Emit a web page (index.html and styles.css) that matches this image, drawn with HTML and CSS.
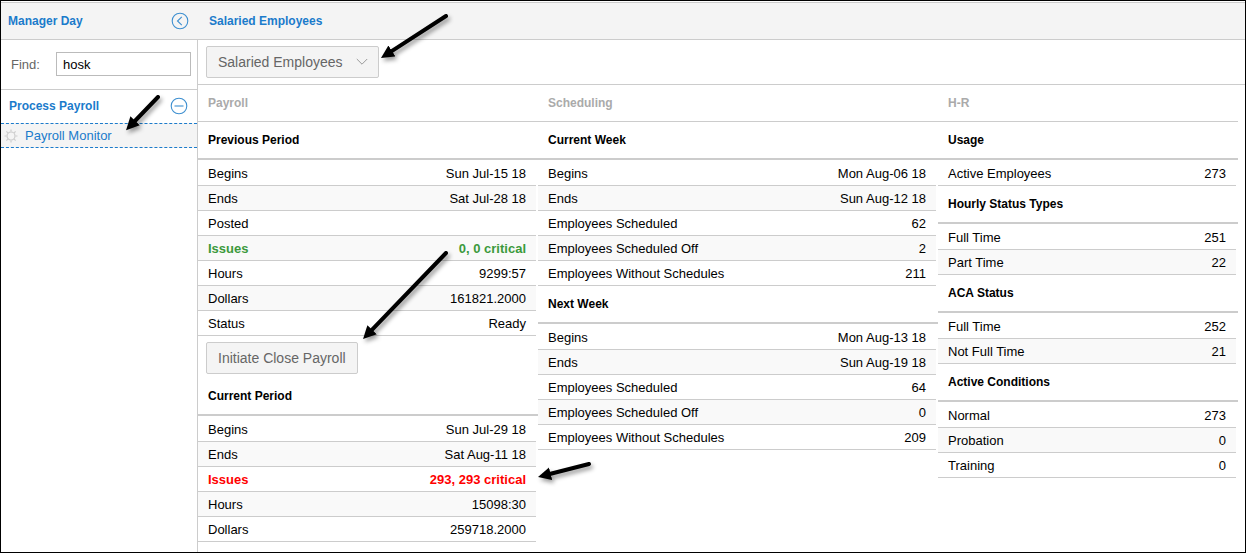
FILE: index.html
```html
<!DOCTYPE html>
<html lang="en">
<head>
<meta charset="utf-8">
<title>Payroll Monitor</title>
<link rel="stylesheet" href="styles.css">
</head>
<body>
<svg class="defs" aria-hidden="true">
  <defs>
    <marker id="head" markerUnits="userSpaceOnUse" markerWidth="16" markerHeight="16" refX="3" refY="7" orient="auto">
      <path d="M0 .5 L13 7 L0 13.5 Z" fill="#000"/>
    </marker>
  </defs>
</svg>
<div class="app">
  <header class="topbar">
    <div class="topbar-side">
      <h1 class="title">Manager Day</h1>
      <button class="icon-btn" aria-label="Collapse menu">
        <svg width="18" height="18" viewBox="0 0 18 18"><circle cx="9" cy="9" r="7.8"/><path d="M10.8 4.8 L6.5 9 L10.8 13.2"/></svg>
      </button>
    </div>
    <h2 class="title topbar-main">Salaried Employees</h2>
  </header>
  <div class="layout">
    <nav class="sidebar">
      <div class="find">
        <label class="find-label" for="find">Find:</label>
        <input class="find-input" id="find" type="text" value="hosk">
      </div>
      <div class="group">
        <h2 class="title">Process Payroll</h2>
        <button class="icon-btn" aria-label="Collapse Process Payroll">
          <svg width="18" height="18" viewBox="0 0 18 18"><circle cx="9" cy="9" r="7.8"/><path d="M4.5 9 H13.5"/></svg>
        </button>
      </div>
      <div class="item">
        <svg class="gear" width="14" height="14" viewBox="0 0 14 14"><circle cx="7" cy="7" r="4"/><path d="M7 .5V2.5M7 11.5V13.5M.5 7H2.5M11.5 7H13.5M2.4 2.4L3.8 3.8M10.2 10.2L11.6 11.6M11.6 2.4L10.2 3.8M3.8 10.2L2.4 11.6"/></svg>
        <a class="item-link" href="#monitor">Payroll Monitor</a>
        <svg class="arrow arrow-item" width="46" height="46"><path d="M38 6 L13 32" marker-end="url(#head)"/></svg>
      </div>
    </nav>
    <main class="main" id="monitor">
      <div class="toolbar">
        <div class="picker">
          <select class="control picker-select" aria-label="Employee group"><option>Salaried Employees</option></select>
          <svg class="chevron" width="12" height="8" viewBox="0 0 12 8"><path d="M.8 1 L6 6.2 L11.2 1"/></svg>
          <svg class="arrow arrow-picker" width="80" height="60"><path d="M71 7 L14.4 43.6" marker-end="url(#head)"/></svg>
        </div>
      </div>
      <div class="columns">
        <section class="column">
          <h2 class="category">Payroll</h2>
          <h3 class="heading" id="previous">Previous Period</h3>
          <div class="rows">
            <table aria-labelledby="previous">
              <tr><th scope="row">Begins</th><td>Sun Jul-15 18</td></tr>
              <tr><th scope="row">Ends</th><td>Sat Jul-28 18</td></tr>
              <tr><th scope="row">Posted</th><td></td></tr>
              <tr class="good"><th scope="row">Issues</th><td>0, 0 critical</td></tr>
              <tr><th scope="row">Hours</th><td>9299:57</td></tr>
              <tr><th scope="row">Dollars</th><td>161821.2000</td></tr>
              <tr><th scope="row">Status</th><td>Ready</td></tr>
            </table>
          </div>
          <div class="action">
            <div class="action-anchor">
              <button class="control">Initiate Close Payroll</button>
              <svg class="arrow arrow-action" width="98" height="100"><path d="M89 6 L13 84.8" marker-end="url(#head)"/></svg>
            </div>
          </div>
          <h3 class="heading" id="current">Current Period</h3>
          <div class="rows">
            <table aria-labelledby="current">
              <tr><th scope="row">Begins</th><td>Sun Jul-29 18</td></tr>
              <tr><th scope="row">Ends</th><td>Sat Aug-11 18</td></tr>
              <tr class="bad"><th scope="row">Issues</th><td>293, 293 critical<svg class="arrow arrow-issues" width="64" height="30"><path d="M57 6 L15.7 16.5" marker-end="url(#head)"/></svg></td></tr>
              <tr><th scope="row">Hours</th><td>15098:30</td></tr>
              <tr><th scope="row">Dollars</th><td>259718.2000</td></tr>
            </table>
          </div>
        </section>
        <section class="column">
          <h2 class="category">Scheduling</h2>
          <h3 class="heading" id="week">Current Week</h3>
          <div class="rows">
            <table aria-labelledby="week">
              <tr><th scope="row">Begins</th><td>Mon Aug-06 18</td></tr>
              <tr><th scope="row">Ends</th><td>Sun Aug-12 18</td></tr>
              <tr><th scope="row">Employees Scheduled</th><td>62</td></tr>
              <tr><th scope="row">Employees Scheduled Off</th><td>2</td></tr>
              <tr><th scope="row">Employees Without Schedules</th><td>211</td></tr>
            </table>
          </div>
          <h3 class="heading" id="next">Next Week</h3>
          <div class="rows">
            <table aria-labelledby="next">
              <tr><th scope="row">Begins</th><td>Mon Aug-13 18</td></tr>
              <tr><th scope="row">Ends</th><td>Sun Aug-19 18</td></tr>
              <tr><th scope="row">Employees Scheduled</th><td>64</td></tr>
              <tr><th scope="row">Employees Scheduled Off</th><td>0</td></tr>
              <tr><th scope="row">Employees Without Schedules</th><td>209</td></tr>
            </table>
          </div>
        </section>
        <section class="column">
          <h2 class="category">H-R</h2>
          <h3 class="heading" id="usage">Usage</h3>
          <div class="rows">
            <table aria-labelledby="usage">
              <tr><th scope="row">Active Employees</th><td>273</td></tr>
            </table>
          </div>
          <h3 class="heading" id="hourly">Hourly Status Types</h3>
          <div class="rows">
            <table aria-labelledby="hourly">
              <tr><th scope="row">Full Time</th><td>251</td></tr>
              <tr><th scope="row">Part Time</th><td>22</td></tr>
            </table>
          </div>
          <h3 class="heading" id="aca">ACA Status</h3>
          <div class="rows">
            <table aria-labelledby="aca">
              <tr><th scope="row">Full Time</th><td>252</td></tr>
              <tr><th scope="row">Not Full Time</th><td>21</td></tr>
            </table>
          </div>
          <h3 class="heading" id="conditions">Active Conditions</h3>
          <div class="rows">
            <table aria-labelledby="conditions">
              <tr><th scope="row">Normal</th><td>273</td></tr>
              <tr><th scope="row">Probation</th><td>0</td></tr>
              <tr><th scope="row">Training</th><td>0</td></tr>
            </table>
          </div>
        </section>
      </div>
    </main>
  </div>
</div>
</body>
</html>
```

FILE: styles.css
```css
* { box-sizing: border-box; }

body {
  margin: 0;
  font: 13px/16px "Liberation Sans", Arial, sans-serif;
  color: #000;
  background: #fff;
}

h1, h2, h3 { margin: 0; font-size: 12px; font-weight: bold; }

.defs { position: absolute; width: 0; height: 0; }

.app {
  display: flex;
  flex-direction: column;
  min-height: 100vh;
  padding-top: 1px;
  border: 1px solid #000;
}

.topbar {
  display: flex;
  align-items: center;
  height: 38px;
  background: #f4f4f4;
  border-top: 1px solid #ccc;
  border-bottom: 1px solid #ccc;
}

.topbar-side {
  display: flex;
  justify-content: space-between;
  align-items: center;
  width: 197px;
  padding: 0 9px 0 7px;
}

.topbar-main { padding-left: 11px; }

.title { color: #1b7bcb; }

.icon-btn {
  display: flex;
  padding: 0;
  border: 0;
  background: none;
}

.icon-btn svg { fill: none; stroke: #3d8fd0; stroke-width: 1.1; }

.layout { display: flex; flex: 1; }

.sidebar {
  flex: none;
  width: 197px;
  border-right: 1px solid #ccc;
}

.find {
  display: flex;
  align-items: center;
  height: 50px;
  padding: 0 6px 2px 10px;
  border-bottom: 1px solid #ccc;
}

.find-label { width: 45px; padding-top: 2px; color: #666; }

.find-input {
  flex: 1;
  min-width: 0;
  height: 24px;
  padding: 2px 6px 0;
  border: 1px solid #bbb;
  font: inherit;
}

.group {
  display: flex;
  justify-content: space-between;
  align-items: center;
  height: 33px;
  padding: 0 9px 2px 8px;
}

.item {
  position: relative;
  display: flex;
  align-items: center;
  gap: 7px;
  height: 25px;
  padding-left: 3px;
  background: #f4f4f4;
  border-top: 1px dashed #1b7bcb;
  border-bottom: 1px dashed #1b7bcb;
}

.item-link { color: #1b7bcb; text-decoration: none; }

.gear { fill: none; stroke: #ccc; stroke-width: 1.2; }

.main { flex: 1; min-width: 0; }

.toolbar {
  display: flex;
  padding: 6px 8px;
  border-bottom: 1px solid #ccc;
  height: 45px;
}

.picker {
  position: relative;
  display: grid;
  align-items: center;
  height: 32px;
}

.control {
  height: 32px;
  padding: 0 11px;
  border: 1px solid #ccc;
  border-radius: 2px;
  background: #f4f4f4;
  color: #666;
  font: 14px/16px "Liberation Sans", Arial, sans-serif;
}

.picker-select {
  grid-area: 1 / 1;
  appearance: none;
  padding-right: 35px;
}

.chevron {
  grid-area: 1 / 1;
  justify-self: end;
  margin-right: 11px;
  fill: none;
  stroke: #999;
  pointer-events: none;
}

.columns {
  display: grid;
  grid-template-columns: 340fr 400fr 300fr;
  padding-right: 7px;
}

.category {
  height: 37px;
  padding-left: 10px;
  border-bottom: 1px solid #ccc;
  color: #aaa;
  line-height: 36px;
}

.heading {
  height: 38px;
  padding-left: 10px;
  border-bottom: 2px solid #ccc;
  line-height: 36px;
}

.rows { padding: 1px 2px 0 0; }

table { width: 100%; border-collapse: separate; border-spacing: 0; }

th, td {
  height: 25px;
  padding: 2px 10px 0;
  border-bottom: 1px solid #ccc;
  font-weight: normal;
  text-align: left;
}

td { position: relative; text-align: right; }

tr:nth-child(even) { background: #f9f9f9; }

.good th, .good td { color: #3c9a3c; font-weight: bold; }

.bad th, .bad td { color: #f00; font-weight: bold; }

.action { display: flex; padding: 6px 8px 4px; }

.action-anchor { position: relative; display: flex; }

/* Callout arrows laid over the controls they point at */
.arrow {
  position: absolute;
  z-index: 2;
  overflow: visible;
  fill: none;
  stroke: #000;
  stroke-width: 4;
  stroke-linecap: round;
  filter: drop-shadow(2px 3px 2px rgba(0, 0, 0, 0.4));
  pointer-events: none;
}

.arrow-item { top: -33px; left: 119px; }
.arrow-picker { top: -37px; left: calc(100% - 4px); }
.arrow-action { top: -95px; left: calc(100% - 1px); }
.arrow-issues { top: -9px; right: -60px; }
```
